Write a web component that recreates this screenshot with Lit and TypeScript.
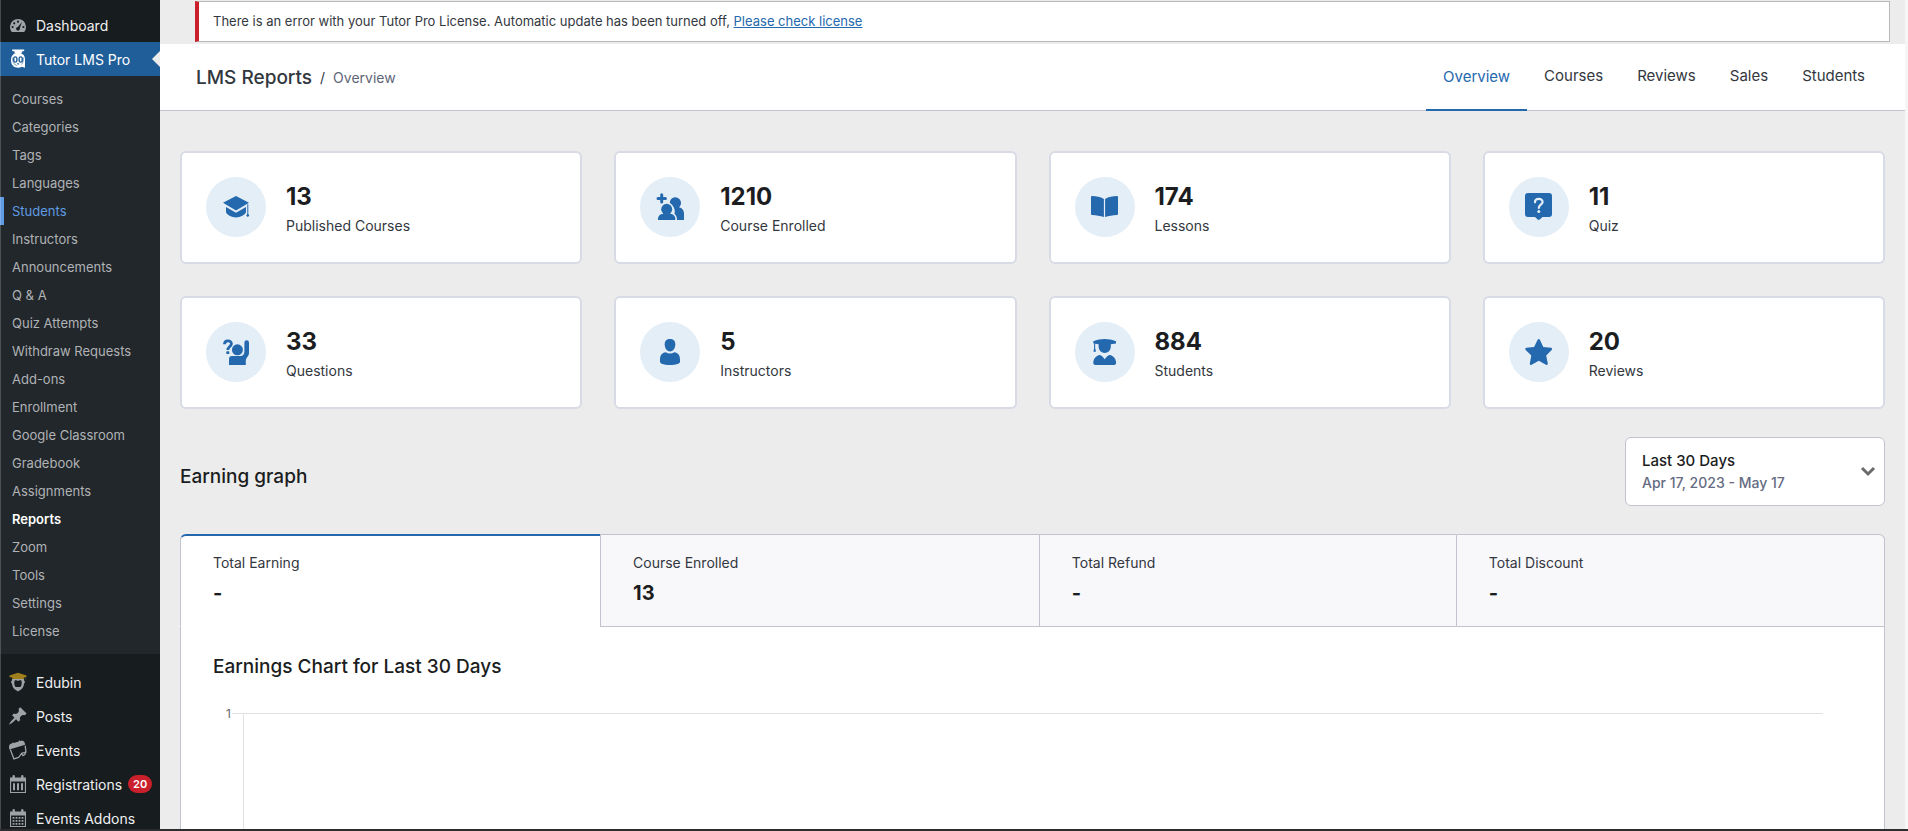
import { LitElement, html, css, svg } from "lit";
import { customElement, state } from "lit/decorators.js";
import { classMap } from "lit/directives/class-map.js";

// Sidebar glyphs, drawn on a 20 x 20 grid.
const menuIcons = {
  dashboard: svg`
    <path fill-rule="evenodd" d="M3.8 17h12.4A8 8 0 1 0 3.8 17zM10 5.6a1.1 1.1 0 1 1 0 2.2 1.1 1.1 0 0 1 0-2.2zM6.2 7.2a1.1 1.1 0 1 1 0 2.2 1.1 1.1 0 0 1 0-2.2zM4.6 10.9a1.1 1.1 0 1 1 0 2.2 1.1 1.1 0 0 1 0-2.2zM15.4 10.9a1.1 1.1 0 1 1 0 2.2 1.1 1.1 0 0 1 0-2.2zM13.9 7l-2.1 6.2c.4 1.3-.5 2.4-1.8 2.4s-2.2-1.200-1.800-2.400c.3-.9 1-1.200 1.700-1.300z"/>`,
  tutor: svg`
    <path d="M4.200.6h12v1.500l-2.400.5v1.600H6.600V2.600l-2.400-.5z"/>
    <path fill-rule="evenodd" d="M10 3.800c4 0 7 2.400 7 6.400v8.600l-3.200-1c-1 .7-2.300 1-3.800 1-4 0-7-2.700-7-7.500s3-7.500 7-7.500zM7.300 7.200a2.300 3.300 0 0 0 0 6.600 2.300 3.300 0 0 0 0-6.600zM12.700 7.200a2.300 3.300 0 0 0 0 6.600 2.300 3.300 0 0 0 0-6.600z"/>
    <rect x="6.500" y="8.400" width="1.600" height="4.200" rx=".8"/>
    <rect x="11.900" y="8.400" width="1.600" height="4.200" rx=".8"/>
    <path d="M4.800 8.500c-.5 4 .8 7.200 4 8M15.300 8.500c.3 3-.3 5.500-2 7" fill="none" stroke="#205e9a" stroke-width=".6"/>
    <path d="M9 14.300h2.200l-1.100 1.900z" fill="#205e9a"/>`,
  edubin: svg`
    <path d="M1.500 3.600L10 .8l8.500 2.800v1.300l-2.700.8V7H4.400V5.700l-2.900-.8z" fill="#a07f1c"/>
    <path fill-rule="evenodd" d="M4 7h12v1.500c1.200.6 1.200 2.400 0 3.200-.2 2.600-1.300 4.400-2.600 5.600L10 19.600l-3.400-2.300C5.300 16.100 4.200 14.300 4 11.700c-1.200-.8-1.200-2.600 0-3.200zM6.600 8.600c-.6 1.900-.5 5.200 1 6.400h4.800c1.500-1.200 1.600-4.500 1-6.400-1.300-.6-2.400-.5-3.400.5-1-1-2.100-1.100-3.400-.5z"/>
    <path d="M17.300 5.500v3" stroke="#343a3e"/>`,
  pin: svg`
    <path d="M10.440 3.020l1.820-1.820 6.360 6.350-1.830 1.820c-1.050-.68-2.480-.57-3.410.36l-.75.75c-.92.93-1.040 2.350-.35 3.410l-1.830 1.820-2.410-2.410-2.800 2.790c-.42.42-3.380 2.710-3.800 2.290s1.860-3.390 2.280-3.810l2.790-2.790L4.100 9.360l1.830-1.820c1.050.69 2.480.57 3.400-.36l.75-.75c.93-.92 1.050-2.350.36-3.410z"/>`,
  events: svg`
    <path d="M1 7.200C1 4.600 2 3.800 4.400 3.300l.4-1.100 1 .8 5-1.600.3-1.200 1.200.9c2.300-.6 3.600-.3 4.300 1.500l.6 2.200L1.400 9.600z"/>
    <path d="M2.300 9.600l3.600 9.300 4.600-1.500c1.600-1 1.700-2.900 3.100-4 1.200-.6 2.900-.4 4.300-1.800L17.200 5.600M13.800 13.400l1 2.200c1.600-.4 2.700-1.800 3.100-4" fill="none" stroke="currentColor" stroke-width="1.300"/>`,
  calendar: svg`
    <path fill-rule="evenodd" d="M2 3.500h2.500V2.200a1.200 1.200 0 0 1 2.400 0v1.300h6.200V2.200a1.200 1.200 0 0 1 2.400 0v1.300H18V19H2zM3.100 7.600V18h13.800V7.600z"/>
    <path d="M5 9.200h2v7H5zM9 9.200h2v7H9zM13 9.200h2v7h-2z"/>`,
  calendarDays: svg`
    <path fill-rule="evenodd" d="M2 3.500h2.500V2.200a1.200 1.200 0 0 1 2.400 0v1.300h6.200V2.200a1.200 1.200 0 0 1 2.400 0v1.300H18V19H2zM3.100 7.600V18h13.800V7.600z"/>
    <path d="M5.500 8.900v8.400M8.500 8.900v8.400M11.500 8.900v8.400M14.500 8.900v8.400" stroke="currentColor" stroke-width="1.800" stroke-dasharray="1.800 1.200" fill="none"/>`,
};

// Stat glyphs, drawn on a 60 x 60 grid with the disc as backdrop.
const statIcons = {
  courses: svg`
    <path d="M17 25.700L30 19l13 6.700-13 7.900z"/>
    <path d="M20 30l10 5.800L40 30v5.600c-1.800 3.200-5.600 4.800-10 4.800s-8.200-1.600-10-4.800z"/>
    <path d="M41.300 27.200h1v9.600l1 2-1.500 1.200-1.600-1.200 1.100-2z"/>`,
  enrolled: svg`
    <path d="M21.700 17.700v7.400M18 21.400h7.400" stroke="currentColor" stroke-width="3" stroke-linecap="round"/>
    <path d="M29.800 25.700a5.600 5.600 0 1 1 9.200 4.500c3.200.6 5 3 5 6.400V43h-7c0-2.600-.7-4.600-2.600-6.200 1-2.600.4-7.300-4.600-11.100z"/>
    <circle cx="26.700" cy="32.300" r="5.500"/>
    <path d="M18 43v-1.200c0-2.600 2-4.800 4.600-4.800h8.100c2.600 0 4.600 2.200 4.600 4.800V43z"/>`,
  lessons: svg`
    <path d="M17 19c4.200 0 8.300.8 11.900 2.900V40c-3.600-1.300-7.500-1.800-11.900-2.100a1 1 0 0 1-1-1V20a1 1 0 0 1 1-1zM42 19c-4.200 0-8.300.8-11.900 2.900V40c3.600-1.300 7.500-1.800 11.900-2.100a1 1 0 0 0 1-1V20a1 1 0 0 0-1-1z"/>`,
  quiz: svg`
    <path d="M19 16h21a3 3 0 0 1 3 3v18a3 3 0 0 1-3 3h-6.500l-2.800 2.600a1.500 1.500 0 0 1-2 0L26 40h-7a3 3 0 0 1-3-3V19a3 3 0 0 1 3-3z"/>
    <path d="M26 25.300c0-4.600 7.600-4.400 7.600-.4 0 2.700-3.800 2.900-3.800 6" fill="none" stroke="#e4eef7" stroke-width="2.200" stroke-linecap="round"/>
    <circle cx="29.800" cy="34.400" r="1.500" fill="#e4eef7"/>`,
  questions: svg`
    <path d="M18.500 22.300c0-4.600 6.900-4.600 6.900-.5 0 2.700-3.600 2.700-3.600 6.200" fill="none" stroke="currentColor" stroke-width="2.800"/>
    <rect x="20.300" y="29.300" width="3" height="2.700" rx=".6"/>
    <circle cx="31.400" cy="27.800" r="5.500"/>
    <path d="M23 43v-6a3 3 0 0 1 3-3h8.400c2.600 0 4-2 4-4.500v-9a2.300 2.300 0 0 1 4.600 0v10.200c0 3.800-3.200 4.700-3.200 8.300v4z"/>`,
  instructor: svg`
    <path d="M30 17c3.200 0 5.300 1.800 5.300 5.300 0 4-2 7.100-5.300 7.100s-5.300-3.100-5.300-7.100c0-3.500 2.100-5.300 5.300-5.300z"/>
    <path d="M25.800 30.200c2.500 1.700 5.900 1.700 8.400 0 4 .5 5.800 3.200 5.800 7.300v2.300c0 2-4 3.200-10 3.200s-10-1.200-10-3.200v-2.300c0-4.100 1.800-6.800 5.800-7.300z"/>`,
  student: svg`
    <path d="M18.300 19.300C22 17.700 26 17 29.700 17s7.700.7 11.300 2.300v2.100l-5.200.9v2.600a6.100 6.100 0 0 1-12.200 0v-2.600l-3.400-.6v4.500l.8 3.600h-2.600l.7-3.600v-4.800l-.8-.2z"/>
    <path d="M24.300 33c2 .1 3.600 1.600 5.400 4.300 1.800-2.700 3.400-4.200 5.400-4.300 3.800 1.300 6 4.200 6 7.800 0 1.400-.9 2.200-2.200 2.200H20.500c-1.300 0-2.200-.8-2.200-2.200 0-3.600 2.200-6.500 6-7.800z"/>`,
  star: svg`
    <path d="M28.500 17.900c.5-1.200 2-1.200 2.500 0l3.300 7 7.700.9c1.100.2 1.500 1.400.7 2.200l-5.500 5.400 1.600 8.100c.1 1.100-.8 1.700-1.800 1.200l-7.200-3.900-7.200 3.900c-1 .5-2-.1-1.800-1.200l1.500-8.100-5.600-5.400c-.8-.8-.4-2 .7-2.200l7.700-.9z"/>`,
};

const submenu = [
  "Courses", "Categories", "Tags", "Languages", "Students", "Instructors",
  "Announcements", "Q & A", "Quiz Attempts", "Withdraw Requests", "Add-ons",
  "Enrollment", "Google Classroom", "Gradebook", "Assignments", "Reports",
  "Zoom", "Tools", "Settings", "License",
];

const lowerMenu = [
  { label: "Edubin", icon: menuIcons.edubin },
  { label: "Posts", icon: menuIcons.pin },
  { label: "Events", icon: menuIcons.events },
  { label: "Registrations", icon: menuIcons.calendar, count: 20 },
  { label: "Events Addons", icon: menuIcons.calendarDays },
];

@customElement("admin-sidebar")
class AdminSidebar extends LitElement {
  static styles = css`
    :host {
      display: block;
      position: relative;
      box-sizing: border-box;
      width: 160px;
      flex: none;
      overflow: hidden;
      background: #171c1f;
    }
    /* hairline of light along the window edge */
    :host::before {
      content: "";
      position: absolute;
      z-index: 1;
      inset: 0 auto 0 0;
      width: 1px;
      background: rgba(255, 255, 255, 0.2);
    }
    ul { list-style: none; margin: 0; padding: 0; }
    a { text-decoration: none; color: inherit; }
    .top { padding-top: 8px; }
    .item {
      display: flex;
      align-items: center;
      height: 34px;
      padding-left: 8px;
      gap: 8px;
      font-size: 14px;
      color: #f0f0f1;
      position: relative;
      white-space: nowrap;
    }
    .item svg { width: 20px; height: 20px; fill: currentColor; color: #9fa3a8; flex: none; }
    .current { background: #205e9a; color: #fff; }
    .current svg { color: #fff; }
    .current::after {
      content: "";
      position: absolute;
      right: 0;
      top: 9px;
      border: 8px solid transparent;
      border-left: 0;
      border-right-color: #ececec;
    }
    .sub { background: #22272b; padding: 9px 0; }
    .sub a {
      display: block;
      padding: 0 12px;
      line-height: 28px;
      font-size: 13px;
      color: #b0b3b6;
      white-space: nowrap;
    }
    .sub .hovered { color: #5f9ce3; box-shadow: inset 4px 0 0 #5f9ce3; }
    .sub .active { color: #fff; font-weight: 600; }
    .lower { padding-top: 11px; }
    .badge {
      background: #c9202c;
      color: #fff;
      border-radius: 9px;
      font-size: 11px;
      font-weight: 600;
      line-height: 18px;
      padding: 0 5px;
      margin-left: -2px;
    }
  `;

  render() {
    return html`
      <nav aria-label="Admin menu">
        <ul class="top">
          <li><a class="item" href="#dashboard"><svg viewBox="0 0 20 20" aria-hidden="true">${menuIcons.dashboard}</svg>Dashboard</a></li>
          <li>
            <a class="item current" href="#tutor"><svg viewBox="0 0 20 20" aria-hidden="true">${menuIcons.tutor}</svg>Tutor LMS Pro</a>
            <ul class="sub">
              ${submenu.map((label) => html`
                <li><a href="#" class=${classMap({ hovered: label === "Students", active: label === "Reports" })}>${label}</a></li>`)}
            </ul>
          </li>
        </ul>
        <ul class="lower">
          ${lowerMenu.map((m) => html`
            <li><a class="item" href="#"><svg viewBox="0 0 20 20" aria-hidden="true">${m.icon}</svg>${m.label}${m.count ? html`<span class="badge">${m.count}</span>` : ""}</a></li>`)}
        </ul>
      </nav>`;
  }
}

const stats = [
  { value: "13", label: "Published Courses", icon: statIcons.courses },
  { value: "1210", label: "Course Enrolled", icon: statIcons.enrolled },
  { value: "174", label: "Lessons", icon: statIcons.lessons },
  { value: "11", label: "Quiz", icon: statIcons.quiz },
  { value: "33", label: "Questions", icon: statIcons.questions },
  { value: "5", label: "Instructors", icon: statIcons.instructor },
  { value: "884", label: "Students", icon: statIcons.student },
  { value: "20", label: "Reviews", icon: statIcons.star },
];

const earningTabs = [
  { label: "Total Earning", value: "-" },
  { label: "Course Enrolled", value: "13" },
  { label: "Total Refund", value: "-" },
  { label: "Total Discount", value: "-" },
];

@customElement("app-root")
class AppRoot extends LitElement {
  @state() private tab = 0;

  static styles = css`
    :host {
      display: flex;
      box-sizing: border-box;
      height: 100vh;
      overflow: hidden;
      border-bottom: 2px solid #2c2d2f;
      background: #ececec;
      font-family: Inter, "Liberation Sans", sans-serif;
      color: #1b1d21;
    }
    h1, h2, h3, p { margin: 0; font-weight: 500; }
    .main {
      flex: 1;
      min-width: 0;
      display: flex;
      flex-direction: column;
      border-right: 3px solid #f6f6f6;
    }
    .notice {
      margin: 1px 15px 2px 35px;
      padding: 0 14px;
      border: 1px solid #b6b8bb;
      border-left: 4px solid #c9202c;
      background: #fff;
      font-size: 13px;
      font-weight: 400;
      line-height: 39px;
      color: #33383e;
    }
    .notice a { color: #2468ae; }
    .header {
      display: flex;
      justify-content: space-between;
      background: #fff;
      border-bottom: 1px solid #c1c4cd;
      height: 66px;
      padding: 0 23px 0 36px;
    }
    .crumbs { display: flex; align-items: center; gap: 8px; }
    .title { font-size: 19px; color: #33373e; }
    .slash { font-size: 14px; color: #33373e; }
    .here { font-size: 14px; color: #5f6577; }
    .tabs { display: flex; }
    .tabs a {
      padding: 0 17px;
      line-height: 64px;
      font-size: 15px;
      color: #33373e;
      text-decoration: none;
    }
    .tabs .on { color: #2468ae; border-bottom: 2px solid #2468ae; margin-bottom: -1px; line-height: 65px; }
    .content {
      flex: 1;
      min-height: 0;
      display: flex;
      flex-direction: column;
      padding: 40px 20px 0;
    }
    .stats { display: grid; grid-template-columns: repeat(4, 1fr); gap: 32px; }
    .card {
      display: flex;
      gap: 20px;
      padding: 24px;
      border: 2px solid #d8dbe6;
      border-radius: 6px;
      background: #fff;
    }
    .disc { width: 60px; height: 60px; border-radius: 50%; background: #e4eef7; fill: currentColor; color: #2468ae; }
    .facts { padding: 2px 0; }
    .num { font-size: 24px; font-weight: 700; line-height: 36px; }
    .lbl { font-size: 14px; font-weight: 400; line-height: 21px; color: #33373e; }
    .bar { display: flex; align-items: center; justify-content: space-between; padding: 28px 0; }
    .heading { font-size: 19px; line-height: 24px; }
    .bar .heading { padding-top: 10px; }
    .period {
      display: flex;
      align-items: center;
      justify-content: space-between;
      width: 260px;
      padding: 12px 8px 12px 16px;
      border: 1px solid #c1c4cd;
      border-radius: 6px;
      background: #fff;
      font: inherit;
      text-align: left;
      color: inherit;
    }
    .period .name { display: block; font-size: 15px; font-weight: 500; line-height: 22px; }
    .period .dates { display: block; font-size: 14px; font-weight: 500; line-height: 21px; color: #646b82; }
    .chevron { width: 16px; height: 12px; fill: none; stroke: #6b6b6b; stroke-width: 3; }
    .panel {
      flex: 1;
      min-height: 0;
      display: flex;
      flex-direction: column;
      border: 1px solid #c1c4cd;
      border-width: 0 1px;
      border-radius: 6px 6px 0 0;
      background: #fff;
    }
    .sums { display: flex; margin: 0 -1px; }
    .sum {
      flex: 1 1 auto;
      padding: 16px 32px 14px;
      border: solid #c1c4cd;
      border-width: 1px 0 1px 1px;
      background: #f8f8fb;
      font: inherit;
      text-align: left;
      color: inherit;
    }
    .sum:first-child { border-top-left-radius: 6px; }
    .sum:last-child { border-right-width: 1px; border-top-right-radius: 6px; }
    .sum.on { background: #fff; border-bottom-color: #fff; border-top: 2px solid #2468ae; padding-top: 15px; }
    .sum .lbl { display: block; line-height: 24px; }
    .sum .val { display: block; font-size: 20px; font-weight: 700; line-height: 37px; }
    .chart { flex: 1; min-height: 0; display: flex; flex-direction: column; padding: 28px 32px 0; }
    .plot { flex: 1; min-height: 0; display: flex; padding: 27px 29px 0 13px; }
    .tick { font-size: 12px; line-height: 16px; color: #666; width: 6px; }
    .stub { width: 11px; height: 1px; margin-top: 7px; background: #e2e2e2; }
    .grid { flex: 1; margin-top: 7px; border-top: 1px solid #e2e2e2; border-left: 1px solid #e2e2e2; }
  `;

  render() {
    return html`
      <admin-sidebar></admin-sidebar>
      <main class="main">
        <p class="notice">There is an error with your Tutor Pro License. Automatic update has been turned off, <a href="#license">Please check license</a></p>
        <header class="header">
          <div class="crumbs">
            <h1 class="title">LMS Reports</h1>
            <span class="slash">/</span>
            <span class="here">Overview</span>
          </div>
          <nav class="tabs" aria-label="Reports">
            ${["Overview", "Courses", "Reviews", "Sales", "Students"].map((t, i) => html`<a href="#" class=${classMap({ on: i === 0 })}>${t}</a>`)}
          </nav>
        </header>
        <div class="content">
          <section class="stats">
            ${stats.map((s) => html`
              <div class="card">
                <svg class="disc" viewBox="0 0 60 60" aria-hidden="true">${s.icon}</svg>
                <div class="facts">
                  <p class="num">${s.value}</p>
                  <p class="lbl">${s.label}</p>
                </div>
              </div>`)}
          </section>
          <div class="bar">
            <h2 class="heading">Earning graph</h2>
            <button class="period" type="button" aria-haspopup="listbox">
              <span>
                <span class="name">Last 30 Days</span>
                <span class="dates">Apr 17, 2023 - May 17</span>
              </span>
              <svg class="chevron" viewBox="0 0 16 12" aria-hidden="true"><path d="M2 2l6 6 6-6"/></svg>
            </button>
          </div>
          <section class="panel">
            <div class="sums">
              ${earningTabs.map((t, i) => html`
                <button type="button" class=${classMap({ sum: true, on: i === this.tab })} @click=${() => (this.tab = i)}>
                  <span class="lbl">${t.label}</span>
                  <span class="val">${t.value}</span>
                </button>`)}
            </div>
            <div class="chart">
              <h3 class="heading">Earnings Chart for Last 30 Days</h3>
              <div class="plot">
                <span class="tick">1</span>
                <span class="stub"></span>
                <div class="grid"></div>
              </div>
            </div>
          </section>
        </div>
      </main>`;
  }
}
